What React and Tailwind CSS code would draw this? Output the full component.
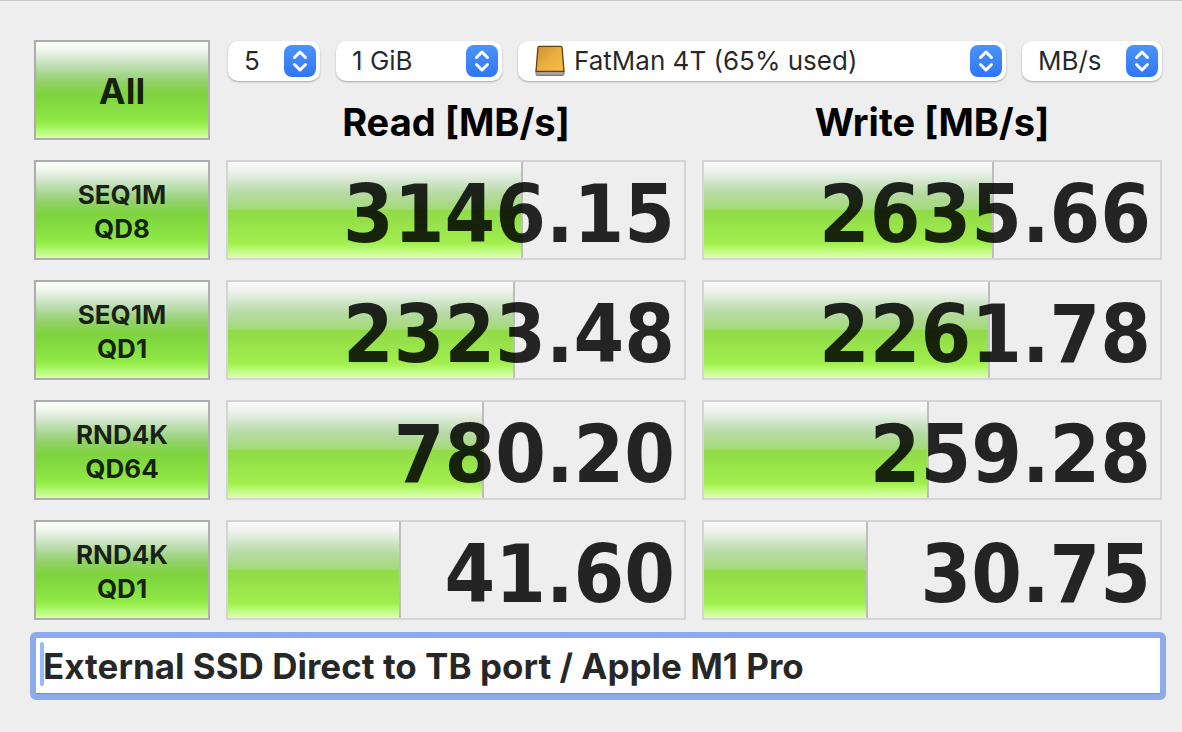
const results = [
  { test: "SEQ1M", queue: "QD8", read: { value: "3146.15", fill: 64.7 }, write: { value: "2635.66", fill: 63.7 } },
  { test: "SEQ1M", queue: "QD1", read: { value: "2323.48", fill: 63 }, write: { value: "2261.78", fill: 62.7 } },
  { test: "RND4K", queue: "QD64", read: { value: "780.20", fill: 56.1 }, write: { value: "259.28", fill: 49.3 } },
  { test: "RND4K", queue: "QD1", read: { value: "41.60", fill: 38 }, write: { value: "30.75", fill: 36 } },
];

function TestButton({ className, children }) {
  return (
    <button
      type="button"
      className={`flex h-[100px] w-full flex-col items-center justify-center border-2 border-[#acacac] bg-[linear-gradient(to_bottom,#fcfffc_0%,#f0f7ee_8%,#cde4c7_20%,#a6d68f_33%,#8fd163_43%,#80d43f_54%,#80d93f_62%,#92ea47_83%,#a4f45e_89%,#d8ffa8_100%)] font-bold text-black/85 ${className}`}
    >
      {children}
    </button>
  );
}

function Meter({ value, fill }) {
  return (
    <div className="grid h-[100px] border-2 border-[#d4d4d4]">
      <div
        className="col-start-1 row-start-1 border-r-2 border-[#bdbdbd] bg-[linear-gradient(to_bottom,#f8f9f8_0%,#f0f4ef_9%,#d3e6ce_20%,#b6daa2_33%,#a2da76_50%,#90da48_50%,#a0ee4d_84%,#b4f86b_90%,#e0ffba_100%)]"
        style={{ width: `${fill}%` }}
      />
      <span className="col-start-1 row-start-1 pt-2 pr-[9px] text-right font-['DejaVu_Sans_Condensed','DejaVu_Sans',sans-serif] text-[81px] leading-[88px] font-bold text-black/85">
        {value}
      </span>
    </div>
  );
}

function Stepper() {
  return (
    <span className="pointer-events-none absolute top-1 right-1 flex h-8 w-8 items-center justify-center rounded-lg bg-linear-to-b from-[#4b93f8] to-[#3076f6]">
      <svg viewBox="0 0 32 32" className="h-8 w-8" fill="none" stroke="white" strokeWidth="3" strokeLinecap="round" strokeLinejoin="round" aria-hidden="true">
        <path d="M10.500 12.500 16 7l5.500 5.500M10.500 19.500 16 25l5.500-5.500" />
      </svg>
    </span>
  );
}

function DriveIcon() {
  return (
    <svg viewBox="0 0 30 32" className="pointer-events-none absolute top-1 left-[17px] h-8 w-[30px]" aria-hidden="true">
      <defs>
        <linearGradient id="drive-top" x1="0" y1="0" x2="1" y2="1">
          <stop offset="0" stopColor="#c98f2b" />
          <stop offset="0.5" stopColor="#eab042" />
          <stop offset="1" stopColor="#f5bd4c" />
        </linearGradient>
        <linearGradient id="drive-base" x1="0" y1="0" x2="0" y2="1">
          <stop offset="0" stopColor="#d8d8d4" />
          <stop offset="1" stopColor="#858580" />
        </linearGradient>
      </defs>
      <path d="M1 26h28v3q0 1.500-1.500 1.500h-25Q1 30.500 1 29z" fill="url(#drive-base)" stroke="#6d6a63" strokeWidth="0.800" />
      <path d="M4.300 1.400h21.400q1.200 0 1.400 1.200L29 26.500H1L2.900 2.600Q3.100 1.400 4.300 1.400z" fill="url(#drive-top)" stroke="#5f4410" strokeWidth="1.300" />
    </svg>
  );
}

function PopUp({ label, value, className, selectClassName = "pl-4", icon }) {
  return (
    <div className={`relative h-10 ${className}`}>
      <select
        aria-label={label}
        className={`block h-10 w-full appearance-none rounded-[10px] bg-white pr-10 text-[26px] leading-[38px] text-black/85 shadow-[0_1px_2px_rgba(0,0,0,0.3)] outline-none ${selectClassName}`}
        defaultValue={value}
      >
        <option>{value}</option>
      </select>
      {icon}
      <Stepper />
    </div>
  );
}

export default function App() {
  return (
    <main className="min-h-screen border-t border-[#c6c6c6] bg-[#eeeeee] pt-[39px] pr-5 pb-8 pl-[34px] font-[Inter,'Liberation_Sans',sans-serif]">
      <table className="flex flex-col gap-5">
        <thead className="grid grid-cols-[176px_1fr_1fr] gap-x-4 text-left">
          <tr className="contents">
            <th rowSpan={2} className="row-span-2">
              <TestButton className="pt-0.5 text-4xl">All</TestButton>
            </th>
            <td colSpan={2} className="col-span-2 flex gap-4 pt-px pl-0.5">
              <PopUp label="Test count" value="5" className="w-[92px]" />
              <PopUp label="Test size" value="1 GiB" className="w-[166px]" />
              <PopUp label="Drive" value="FatMan 4T (65% used)" className="flex-1" selectClassName="pl-14" icon={<DriveIcon />} />
              <PopUp label="Unit" value="MB/s" className="w-[140px]" />
            </td>
          </tr>
          <tr className="contents">
            <th className="pt-[22px] text-center text-[38px] leading-9 font-bold text-black">Read [MB/s]</th>
            <th className="pt-[22px] text-center text-[38px] leading-9 font-bold text-black">Write [MB/s]</th>
          </tr>
        </thead>
        <tbody className="flex flex-col gap-5">
          {results.map(({ test, queue, read, write }) => (
            <tr key={test + queue} className="grid grid-cols-[176px_1fr_1fr] gap-x-4">
              <th>
                <TestButton className="pt-1 text-[26px] leading-[34px]">
                  <span>{test}</span>
                  <span>{queue}</span>
                </TestButton>
              </th>
              <td><Meter {...read} /></td>
              <td><Meter {...write} /></td>
            </tr>
          ))}
        </tbody>
      </table>
      <div className="relative mt-3 -mr-1 -ml-1">
        <input
          type="text"
          aria-label="Comment"
          defaultValue="External SSD Direct to TB port / Apple M1 Pro"
          className="block h-[68px] w-full rounded-md border-[6px] border-[#8caaee] bg-white pl-[7px] text-[35px] font-bold text-black/85 shadow-[inset_0_-1px_0_#6f8fd6] outline-none"
        />
        <span className="absolute top-2.5 left-2.5 h-11 w-1 rounded-sm bg-[#97baff]" />
      </div>
    </main>
  );
}
